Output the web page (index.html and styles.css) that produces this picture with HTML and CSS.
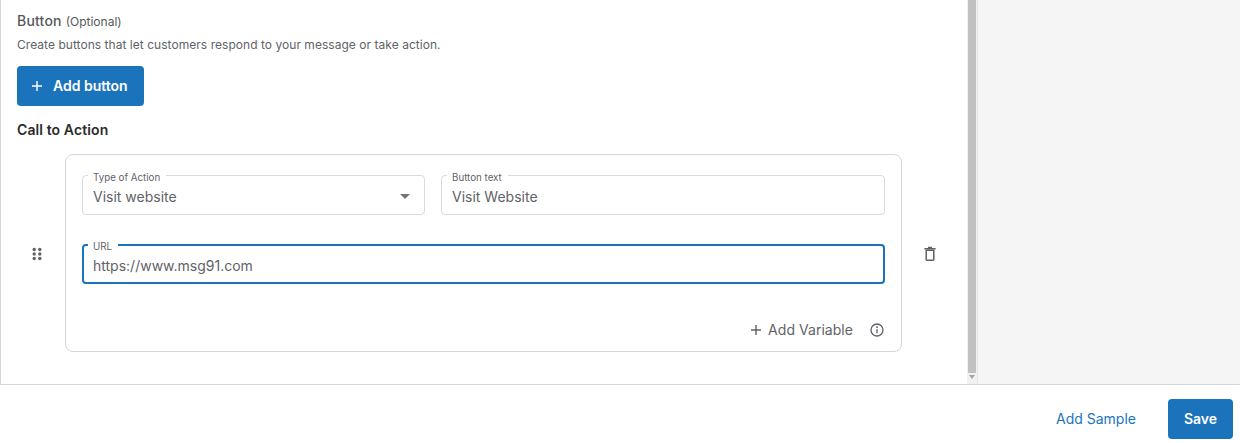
FILE: index.html
```html
<!DOCTYPE html>
<html lang="en">
<head>
<meta charset="utf-8">
<title>Button</title>
<link rel="stylesheet" href="styles.css">
</head>
<body>
<div class="top">
  <main class="panel">
    <h2 class="title">Button <span class="optional">(Optional)</span></h2>
    <p class="desc">Create buttons that let customers respond to your message or take action.</p>
    <button class="btn add-btn" type="button">
      <svg class="plus" viewBox="0 0 12 12" width="12" height="12"><path d="M6 1v10M1 6h10" stroke="#fff" stroke-width="1.4" fill="none"/></svg>
      <span>Add button</span>
    </button>
    <h3 class="cta">Call to Action</h3>
    <div class="row">
      <div class="handle">
        <svg viewBox="0 0 10 14" width="10" height="14" fill="#5f6368"><circle cx="2.2" cy="2.5" r="1.7"/><circle cx="7.8" cy="2.5" r="1.7"/><circle cx="2.2" cy="7" r="1.7"/><circle cx="7.8" cy="7" r="1.7"/><circle cx="2.2" cy="11.5" r="1.7"/><circle cx="7.8" cy="11.5" r="1.7"/></svg>
      </div>
      <div class="card">
        <div class="fields">
          <fieldset class="field">
            <legend>Type of Action</legend>
            <div class="value select"><span>Visit website</span><i class="caret"></i></div>
          </fieldset>
          <fieldset class="field">
            <legend>Button text</legend>
            <div class="value"><span>Visit Website</span></div>
          </fieldset>
        </div>
        <fieldset class="field focused">
          <legend>URL</legend>
          <div class="value"><span>https://www.msg91.com</span></div>
        </fieldset>
        <div class="card-foot">
          <svg class="plus-small" viewBox="0 0 12 12" width="12" height="12"><path d="M6 1v10M1 6h10" stroke="#5f6368" stroke-width="1.4" fill="none"/></svg>
          <span class="add-var">Add Variable</span>
          <svg class="info" viewBox="0 0 16 16" width="16" height="16"><circle cx="8" cy="8" r="6" stroke="#5f6368" stroke-width="1.3" fill="none"/><path d="M8 7.3v4" stroke="#5f6368" stroke-width="1.4"/><circle cx="8" cy="5.2" r=".9" fill="#5f6368"/></svg>
        </div>
      </div>
      <div class="trash">
        <svg viewBox="0 0 12 15" width="12" height="15"><path d="M4 .7h4v1.400h3.600v1.500H.4V2.100H4z" fill="#5f6368"/><path d="M2.200 4.200h7.600v9.200a.9.9 0 0 1-.9.9H3.100a.9.9 0 0 1-.9-.9z" fill="none" stroke="#5f6368" stroke-width="1.500"/></svg>
      </div>
    </div>
  </main>
  <div class="scrollbar">
    <div class="thumb"></div>
    <i class="arrow"></i>
  </div>
  <aside class="side"></aside>
</div>
<footer class="foot">
  <a class="link">Add Sample</a>
  <button class="btn save" type="button">Save</button>
</footer>
</body>
</html>
```
FILE: styles.css
```css
* { box-sizing: border-box; }
html, body { margin: 0; height: 443px; overflow: hidden; }
body {
  font-family: Inter, "Liberation Sans", sans-serif;
  color: #5f6368;
  background: #fff;
  display: flex;
  flex-direction: column;
}
.top {
  height: 385px;
  display: flex;
  border-bottom: 1px solid #d5d7da;
}
.panel {
  width: 967px;
  border-left: 1px solid #d5d7da;
  padding: 12px 0 0 16px;
}
.title {
  margin: 0;
  font-size: 14px;
  line-height: 17px;
  font-weight: 500;
  letter-spacing: 0.2px;
  color: #55585c;
}
.optional { font-size: 12px; font-weight: 400; letter-spacing: 0; }
.desc {
  margin: 7px 0 0;
  font-size: 12px;
  line-height: 16px;
  letter-spacing: 0.04px;
  color: #5f6368;
}
.btn {
  border: 0;
  border-radius: 4px;
  background: #1b74bb;
  color: #fff;
  font-family: inherit;
  font-weight: 600;
  font-size: 14px;
  padding-bottom: 2px;
  cursor: pointer;
}
.add-btn {
  margin-top: 13px;
  width: 127px;
  height: 40px;
  display: flex;
  align-items: center;
  gap: 10px;
  padding: 0 0 1px 14px;
}
.plus { flex: none; }
.cta {
  margin: 15px 0 0;
  font-size: 14px;
  line-height: 17px;
  font-weight: 600;
  letter-spacing: 0.1px;
  color: #2b2b2b;
}
.row {
  margin-top: 16px;
  display: flex;
  align-items: center;
}
.handle {
  width: 48px;
  display: flex;
  padding: 2px 0 0 15px;
}
.card {
  width: 837px;
  height: 198px;
  border: 1px solid #d5d7da;
  border-radius: 8px;
  padding: 13px 16px 0;
}
.fields {
  display: grid;
  grid-template-columns: 343px 444px;
  gap: 16px;
  margin-bottom: 22px;
}
.field {
  margin: 0;
  min-width: 0;
  height: 47px;
  padding: 0 10px;
  border: 1px solid #d9dadc;
  border-radius: 4px;
}
.field legend {
  margin-left: -5px;
  padding: 4px 6px 0 5px;
  font-size: 9.75px;
  line-height: 11px;
  color: #5f6368;
}
.value {
  height: 27px;
  display: flex;
  align-items: center;
  justify-content: space-between;
  font-size: 14px;
  color: #5f6368;
}
.select { padding-right: 4px; }
.caret {
  width: 0;
  height: 0;
  border-left: 5.500px solid transparent;
  border-right: 5.500px solid transparent;
  border-top: 5.500px solid #70757a;
}
.focused {
  border: 2px solid #1b74bb;
  padding: 0 9px;
}
.focused legend { padding: 4px 6px 1px 5px; }
.focused .value { height: 25px; }
.card-foot {
  margin-top: 37px;
  display: flex;
  align-items: center;
  justify-content: flex-end;
}
.plus-small { margin-right: 6px; }
.add-var { font-size: 14px; font-weight: 400; letter-spacing: 0.04px; color: #5f6368; }
.info { margin-left: 16px; }
.trash {
  margin-left: 22px;
  display: flex;
}
.scrollbar {
  width: 10px;
  background: #f1f1f1;
  display: flex;
  flex-direction: column;
  align-items: center;
}
.thumb {
  width: 8px;
  height: 373px;
  background: #c1c1c1;
}
.arrow {
  margin-top: 2px;
  width: 0;
  height: 0;
  border-left: 3px solid transparent;
  border-right: 3px solid transparent;
  border-top: 4px solid #a3a3a3;
}
.side {
  flex: 1;
  background: #f5f5f5;
  border-left: 1px solid #e3e3e3;
}
.foot {
  flex: 1;
  display: flex;
  align-items: flex-end;
  justify-content: flex-end;
  padding: 0 7px 4px 0;
}
.link {
  color: #1b74bb;
  font-size: 14px;
  font-weight: 400;
  margin: 0 32px 12px 0;
}
.save {
  width: 65px;
  height: 40px;
  font-size: 14px;
}
```
